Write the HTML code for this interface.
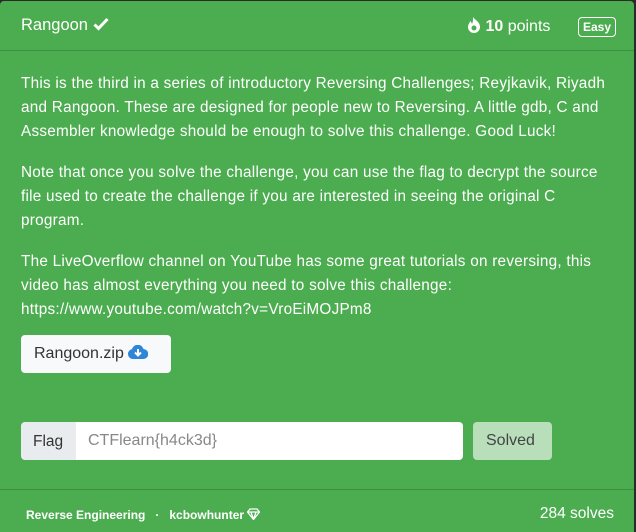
<!DOCTYPE html>
<html><head><meta charset="utf-8"><style>
*{box-sizing:border-box;margin:0;padding:0}
body{width:636px;height:532px;background:#2a2a2a;font-family:"Liberation Sans",sans-serif;overflow:hidden}
.card{position:absolute;left:0;top:1px;width:634px;height:531px;background:#4cad50;border-radius:4px 4px 0 0;color:#fff}
.hdr{height:50px;border-bottom:1px solid #3f8f42;position:relative}
.title{position:absolute;left:21px;top:15px;font-size:16.5px}
.pts{position:absolute;left:467px;top:16px;font-size:16px}
.badge{position:absolute;left:578px;top:16px;border:1px solid #fff;border-radius:4px;font-size:12px;font-weight:bold;padding:1px 4px;height:20px;line-height:16px}
.body{padding:21px 21px 0 21px;font-size:15.3px;line-height:24px;letter-spacing:0.25px}
.body p{margin-bottom:17px}
.btn{position:absolute;left:21px;top:334px;width:150px;height:38px;background:#f8f9fa;border-radius:4px;color:#333;font-size:16px;padding:10px 0 0 13px}
.flagl{position:absolute;left:21px;top:421px;width:55px;height:38px;background:#e9ecef;border-radius:4px 0 0 4px;color:#333;font-size:15.5px;padding:11px 0 0 12px}
.inp{position:absolute;left:76px;top:421px;width:387px;height:38px;background:#fff;border-radius:0 4px 4px 0;color:#888;font-size:16px;padding:10px 0 0 12px}
.solved{position:absolute;left:473px;top:421px;width:79px;height:38px;background:#b8dfba;border-radius:4px;color:#444;font-size:16px;padding:10px 0 0 13px}
.ftr{position:absolute;left:0;top:488px;width:634px;border-top:1px solid #3f8f42;height:43px}
.cat{position:absolute;left:26px;top:18px;font-size:12px;font-weight:bold}
.solves{position:absolute;right:20px;top:15px;font-size:15.5px}
</style></head><body><div class="card">
<div class="hdr"><div class="title">Rangoon <svg width="16" height="14" viewBox="0 0 16 14" style="vertical-align:-1px"><path d="M1.5 7.5l4 4L14.5 2" stroke="#fff" stroke-width="3" fill="none"/></svg></div>
<div class="pts"><svg width="14" height="16" viewBox="0 0 14 16" style="vertical-align:-2px"><path d="M6 0C8 3 13 5 13 10a6 6 0 0 1-12 0c0-3 2-4 2-6 1 1 2 2 2 3C6 5 6 3 6 0z" fill="#fff"/><circle cx="7" cy="11" r="2.5" fill="#4cad50"/></svg> <b>10</b> points</div>
<div class="badge">Easy</div></div>
<div class="body">
<p>This is the third in a series of introductory Reversing Challenges; Reyjkavik, Riyadh and Rangoon. These are designed for people new to Reversing. A little gdb, C and Assembler knowledge should be enough to solve this challenge. Good Luck!</p>
<p>Note that once you solve the challenge, you can use the flag to decrypt the source file used to create the challenge if you are interested in seeing the original C program.</p>
<p>The LiveOverflow channel on YouTube has some great tutorials on reversing, this video has almost everything you need to solve this challenge: https://www.youtube.com/watch?v=VroEiMOJPm8</p>
</div>
<div class="btn">Rangoon.zip <svg width="20" height="14" viewBox="0 0 20 14" style="vertical-align:-1px"><path d="M5 14a5 5 0 0 1-1-9.9A6 6 0 0 1 15.5 4 5 5 0 0 1 15 14z" fill="#2f86d6"/><path d="M10 4v6M7 7.5l3 3 3-3" stroke="#fff" stroke-width="2" fill="none"/></svg></div>
<div class="flagl">Flag</div><div class="inp">CTFlearn{h4ck3d}</div><div class="solved">Solved</div>
<div class="ftr"><div class="cat">Reverse Engineering &nbsp;&nbsp;·&nbsp;&nbsp; kcbowhunter <svg width="13" height="12" viewBox="0 0 13 12" style="vertical-align:-1px"><path d="M3 1h7l2.5 3L6.5 11.5 0.5 4z M0.5 4h12 M4 4l2.5 7.5L9 4" stroke="#fff" stroke-width="1.3" fill="none"/></svg></div><div class="solves">284 solves</div></div>
</div></body></html>
